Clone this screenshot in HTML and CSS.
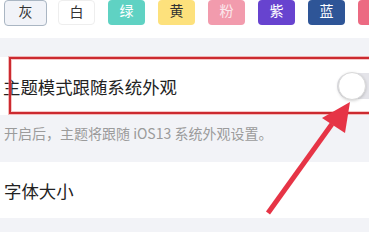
FILE: index.html
```html
<!DOCTYPE html>
<html lang="zh">
<head>
<meta charset="utf-8">
<link rel="stylesheet" href="styles.css">
</head>
<body>
<div class="page">
  <div class="palette">
    <div class="swatch sel">灰</div>
    <div class="swatch white">白</div>
    <div class="swatch green">绿</div>
    <div class="swatch yellow">黄</div>
    <div class="swatch pink">粉</div>
    <div class="swatch purple">紫</div>
    <div class="swatch blue">蓝</div>
    <div class="swatch red"></div>
  </div>
  <div class="gap"></div>
  <div class="row">
    <span class="title">主题模式跟随系统外观</span>
    <div class="toggle"><div class="knob"></div></div>
  </div>
  <div class="hint">开启后，主题将跟随 iOS13 系统外观设置。</div>
  <div class="row row2">
    <span class="title">字体大小</span>
  </div>
  <div class="mark"></div>
  <svg class="arrow" width="369" height="232" viewBox="0 0 369 232">
    <line x1="268" y1="213" x2="332" y2="124" stroke="#e63446" stroke-width="5"/>
    <polygon points="350,102 322,118 345,133" fill="#e63446"/>
  </svg>
</div>
</body>
</html>
```

FILE: styles.css
```css
* { box-sizing: border-box; }
html, body { margin: 0; padding: 0; }
body {
  width: 369px;
  height: 232px;
  overflow: hidden;
  background: #f2f3f7;
  font-family: "Noto Sans CJK SC", "Noto Sans", sans-serif;
}
.page { position: relative; width: 369px; height: 232px; overflow: hidden; }
.palette {
  background: #fff;
  height: 38px;
  display: flex;
  align-items: flex-start;
  padding-left: 4px;
  gap: 13px;
  overflow: hidden;
}
.swatch {
  flex: none;
  width: 37px;
  height: 25px;
  border-radius: 4px;
  display: flex;
  justify-content: center;
  align-items: flex-start;
  padding-top: 0;
  font-size: 14px;
  line-height: 20px;
  color: #fff;
}
.swatch.sel {
  width: 43px;
  height: 26px;
  background: #f1f3f8;
  border: 1px solid #aab6c3;
  color: #333;
  margin-right: -2px;
}
.swatch.white { background: #fff; border: 1px solid #eeeeee; color: #333; }
.swatch.green { background: #5fd2c3; }
.swatch.yellow { background: #fde17c; color: #333; }
.swatch.pink { background: #f29bad; color: #fbe7ec; }
.swatch.purple { background: #6743cf; }
.swatch.blue { background: #2e5597; }
.swatch.red { background: #ec6a82; }
.gap { height: 19px; }
.row {
  background: #fff;
  height: 58px;
  display: flex;
  align-items: center;
  justify-content: space-between;
  padding-left: 3px;
  position: relative;
}
.row2 { height: 56px; padding-left: 4px; }
.title { font-size: 17.4px; color: #222; }
.toggle {
  width: 40px;
  height: 26px;
  background: #e4e4e9;
  border-radius: 13px 0 0 13px;
  margin-right: -8px;
  position: relative;
}
.knob {
  position: absolute;
  left: 1px;
  top: -1px;
  width: 28px;
  height: 28px;
  border-radius: 50%;
  background: #fff;
  border: 1px solid #dadada;
  box-shadow: 0 1px 3px rgba(0,0,0,0.18);
}
.hint {
  height: 47px;
  padding: 8px 0 0 4px;
  font-size: 14px;
  line-height: 20px;
  color: #9b9b9b;
}
.mark {
  position: absolute;
  left: 9px;
  top: 57px;
  width: 380px;
  height: 57px;
  border: 2px solid #cc2a30;
  box-shadow: 0 0 0 1px rgba(235,130,130,0.55), inset 0 0 0 1px rgba(235,130,130,0.45);
}
.arrow { position: absolute; left: 0; top: 0; }
```
